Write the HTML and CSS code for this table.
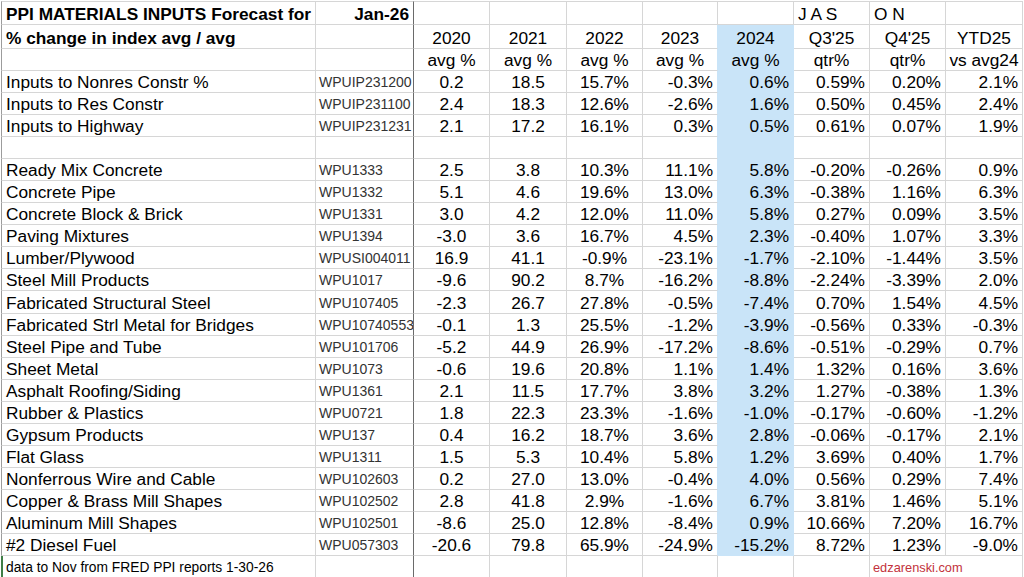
FILE: index.html
```html
<!DOCTYPE html>
<html lang="en">
<head>
<meta charset="utf-8">
<title>PPI Materials Inputs Forecast</title>
<link rel="stylesheet" href="styles.css">
</head>
<body>
<table class="sheet">
  <colgroup>
    <col class="w-a"><col class="w-b"><col class="w-c"><col class="w-d"><col class="w-e">
    <col class="w-f"><col class="w-g"><col class="w-h"><col class="w-i"><col class="w-j">
  </colgroup>
  <thead>
    <tr class="r1">
      <td class="lbl bold">PPI MATERIALS INPUTS Forecast for</td>
      <td class="code bold dateh">Jan-26</td>
      <td class="n"></td><td class="n"></td><td class="n"></td><td class="r"></td><td class="g0"></td>
      <td class="mon">J A S</td><td class="mon">O N</td><td></td>
    </tr>
    <tr class="r2">
      <td class="lbl bold">% change in index avg / avg</td>
      <td class="code"></td>
      <td class="n">2020</td><td class="n">2021</td><td class="n">2022</td><td class="n f">2023</td><td class="n g">2024</td>
      <td class="n">Q3'25</td><td class="n">Q4'25</td><td class="n">YTD25</td>
    </tr>
    <tr class="r3">
      <td class="lbl"></td>
      <td class="code"></td>
      <td class="n">avg %</td><td class="n">avg %</td><td class="n">avg %</td><td class="n f">avg %</td><td class="n g">avg %</td>
      <td class="n">qtr%</td><td class="n">qtr%</td><td class="n">vs avg24</td>
    </tr>
  </thead>
  <tbody>
    <tr><td class="lbl">Inputs to Nonres Constr %</td><td class="code">WPUIP231200</td><td class="n">0.2</td><td class="n">18.5</td><td class="n">15.7%</td><td class="r f">-0.3%</td><td class="r g">0.6%</td><td class="r">0.59%</td><td class="r">0.20%</td><td class="r">2.1%</td></tr>
    <tr><td class="lbl">Inputs to Res Constr</td><td class="code">WPUIP231100</td><td class="n">2.4</td><td class="n">18.3</td><td class="n">12.6%</td><td class="r f">-2.6%</td><td class="r g">1.6%</td><td class="r">0.50%</td><td class="r">0.45%</td><td class="r">2.4%</td></tr>
    <tr><td class="lbl">Inputs to Highway</td><td class="code">WPUIP231231</td><td class="n">2.1</td><td class="n">17.2</td><td class="n">16.1%</td><td class="r f">0.3%</td><td class="r g">0.5%</td><td class="r">0.61%</td><td class="r">0.07%</td><td class="r">1.9%</td></tr>
    <tr><td class="lbl"></td><td class="code"></td><td class="n"></td><td class="n"></td><td class="n"></td><td class="r f"></td><td class="r g"></td><td class="r"></td><td class="r"></td><td class="r"></td></tr>
    <tr><td class="lbl">Ready Mix Concrete</td><td class="code">WPU1333</td><td class="n">2.5</td><td class="n">3.8</td><td class="n">10.3%</td><td class="r f">11.1%</td><td class="r g">5.8%</td><td class="r">-0.20%</td><td class="r">-0.26%</td><td class="r">0.9%</td></tr>
    <tr><td class="lbl">Concrete Pipe</td><td class="code">WPU1332</td><td class="n">5.1</td><td class="n">4.6</td><td class="n">19.6%</td><td class="r f">13.0%</td><td class="r g">6.3%</td><td class="r">-0.38%</td><td class="r">1.16%</td><td class="r">6.3%</td></tr>
    <tr><td class="lbl">Concrete Block &amp; Brick</td><td class="code">WPU1331</td><td class="n">3.0</td><td class="n">4.2</td><td class="n">12.0%</td><td class="r f">11.0%</td><td class="r g">5.8%</td><td class="r">0.27%</td><td class="r">0.09%</td><td class="r">3.5%</td></tr>
    <tr><td class="lbl">Paving Mixtures</td><td class="code">WPU1394</td><td class="n">-3.0</td><td class="n">3.6</td><td class="n">16.7%</td><td class="r f">4.5%</td><td class="r g">2.3%</td><td class="r">-0.40%</td><td class="r">1.07%</td><td class="r">3.3%</td></tr>
    <tr><td class="lbl">Lumber/Plywood</td><td class="code">WPUSI004011</td><td class="n">16.9</td><td class="n">41.1</td><td class="n">-0.9%</td><td class="r f">-23.1%</td><td class="r g">-1.7%</td><td class="r">-2.10%</td><td class="r">-1.44%</td><td class="r">3.5%</td></tr>
    <tr><td class="lbl">Steel Mill Products</td><td class="code">WPU1017</td><td class="n">-9.6</td><td class="n">90.2</td><td class="n">8.7%</td><td class="r f">-16.2%</td><td class="r g">-8.8%</td><td class="r">-2.24%</td><td class="r">-3.39%</td><td class="r">2.0%</td></tr>
    <tr><td class="lbl">Fabricated Structural Steel</td><td class="code">WPU107405</td><td class="n">-2.3</td><td class="n">26.7</td><td class="n">27.8%</td><td class="r f">-0.5%</td><td class="r g">-7.4%</td><td class="r">0.70%</td><td class="r">1.54%</td><td class="r">4.5%</td></tr>
    <tr><td class="lbl">Fabricated Strl Metal for Bridges</td><td class="code">WPU10740553</td><td class="n">-0.1</td><td class="n">1.3</td><td class="n">25.5%</td><td class="r f">-1.2%</td><td class="r g">-3.9%</td><td class="r">-0.56%</td><td class="r">0.33%</td><td class="r">-0.3%</td></tr>
    <tr><td class="lbl">Steel Pipe and Tube</td><td class="code">WPU101706</td><td class="n">-5.2</td><td class="n">44.9</td><td class="n">26.9%</td><td class="r f">-17.2%</td><td class="r g">-8.6%</td><td class="r">-0.51%</td><td class="r">-0.29%</td><td class="r">0.7%</td></tr>
    <tr><td class="lbl">Sheet Metal</td><td class="code">WPU1073</td><td class="n">-0.6</td><td class="n">19.6</td><td class="n">20.8%</td><td class="r f">1.1%</td><td class="r g">1.4%</td><td class="r">1.32%</td><td class="r">0.16%</td><td class="r">3.6%</td></tr>
    <tr><td class="lbl">Asphalt Roofing/Siding</td><td class="code">WPU1361</td><td class="n">2.1</td><td class="n">11.5</td><td class="n">17.7%</td><td class="r f">3.8%</td><td class="r g">3.2%</td><td class="r">1.27%</td><td class="r">-0.38%</td><td class="r">1.3%</td></tr>
    <tr><td class="lbl">Rubber &amp; Plastics</td><td class="code">WPU0721</td><td class="n">1.8</td><td class="n">22.3</td><td class="n">23.3%</td><td class="r f">-1.6%</td><td class="r g">-1.0%</td><td class="r">-0.17%</td><td class="r">-0.60%</td><td class="r">-1.2%</td></tr>
    <tr><td class="lbl">Gypsum Products</td><td class="code">WPU137</td><td class="n">0.4</td><td class="n">16.2</td><td class="n">18.7%</td><td class="r f">3.6%</td><td class="r g">2.8%</td><td class="r">-0.06%</td><td class="r">-0.17%</td><td class="r">2.1%</td></tr>
    <tr><td class="lbl">Flat Glass</td><td class="code">WPU1311</td><td class="n">1.5</td><td class="n">5.3</td><td class="n">10.4%</td><td class="r f">5.8%</td><td class="r g">1.2%</td><td class="r">3.69%</td><td class="r">0.40%</td><td class="r">1.7%</td></tr>
    <tr><td class="lbl">Nonferrous Wire and Cable</td><td class="code">WPU102603</td><td class="n">0.2</td><td class="n">27.0</td><td class="n">13.0%</td><td class="r f">-0.4%</td><td class="r g">4.0%</td><td class="r">0.56%</td><td class="r">0.29%</td><td class="r">7.4%</td></tr>
    <tr><td class="lbl">Copper &amp; Brass Mill Shapes</td><td class="code">WPU102502</td><td class="n">2.8</td><td class="n">41.8</td><td class="n">2.9%</td><td class="r f">-1.6%</td><td class="r g">6.7%</td><td class="r">3.81%</td><td class="r">1.46%</td><td class="r">5.1%</td></tr>
    <tr><td class="lbl">Aluminum Mill Shapes</td><td class="code">WPU102501</td><td class="n">-8.6</td><td class="n">25.0</td><td class="n">12.8%</td><td class="r f">-8.4%</td><td class="r g">0.9%</td><td class="r">10.66%</td><td class="r">7.20%</td><td class="r">16.7%</td></tr>
    <tr><td class="lbl">#2 Diesel Fuel</td><td class="code">WPU057303</td><td class="n">-20.6</td><td class="n">79.8</td><td class="n">65.9%</td><td class="r f">-24.9%</td><td class="r g">-15.2%</td><td class="r">8.72%</td><td class="r">1.23%</td><td class="r">-9.0%</td></tr>
  </tbody>
  <tfoot>
    <tr class="foot">
      <td class="lbl note">data to Nov from FRED PPI reports 1-30-26</td>
      <td class="code"></td>
      <td></td><td></td><td></td><td></td><td></td><td></td>
      <td class="site" colspan="2">edzarenski.com</td>
    </tr>
  </tfoot>
</table>
</body>
</html>
```

FILE: styles.css
```css
html, body {
  margin: 0;
  padding: 0;
  background: #ffffff;
}

body {
  font-family: "Liberation Sans", Arial, sans-serif;
  color: #000000;
  overflow: hidden;
}

.sheet {
  border-collapse: separate;
  border-spacing: 0;
  table-layout: fixed;
  width: 1022px;
  margin: 1px 0 0 1px;
  font-size: 17.3px;
}

.w-a { width: 315px; }
.w-b { width: 98px; }
.w-c { width: 76px; }
.w-d { width: 77px; }
.w-e { width: 76px; }
.w-f { width: 75px; }
.w-g { width: 76px; }
.w-h { width: 76px; }
.w-i { width: 76px; }
.w-j { width: 77px; }

.sheet td {
  box-sizing: border-box;
  height: 22.06px;
  padding: 0 4px 0 3px;
  border-right: 1px solid #d6d6d6;
  border-bottom: 1px solid #d6d6d6;
  line-height: 20px;
  vertical-align: bottom;
  white-space: nowrap;
  overflow: hidden;
}

.sheet .r1 td {
  height: 24px;
  border-top: 1px solid #d6d6d6;
}

.sheet .r2 td { height: 24px; }
.sheet .r3 td { height: 22px; }
.sheet .foot td { height: 22px; }

.sheet td.lbl {
  border-left: 1px solid #9c9c9c;
  padding-left: 4px;
}

.sheet .foot td.lbl {
  border-left: 2px solid #3f7d46;
  padding-left: 3px;
}

.sheet td.code {
  font-size: 14px;
  line-height: 19px;
  color: #333333;
  padding-left: 3px;
  border-right-color: #6a6a6a;
}

.sheet td.bold {
  font-weight: bold;
  font-size: 17.3px;
  line-height: 20px;
  color: #000000;
}

.sheet td.dateh { text-align: right; }

.sheet td.n { text-align: center; padding: 0 2px; }
.sheet td.r { text-align: right; }

.sheet td.f { border-right-color: #c9e4f8; }

.sheet td.g {
  background: #c9e4f8;
  border-right-color: #c9e4f8;
  border-bottom-color: #c9e4f8;
}

.sheet td.mon {
  text-align: left;
  padding-left: 4px;
}

.sheet td.note {
  font-size: 13.8px;
  line-height: 18px;
}

.sheet td.site {
  font-size: 12.8px;
  line-height: 18px;
  color: #c3323c;
  padding-left: 3px;
  text-align: left;
}
```
